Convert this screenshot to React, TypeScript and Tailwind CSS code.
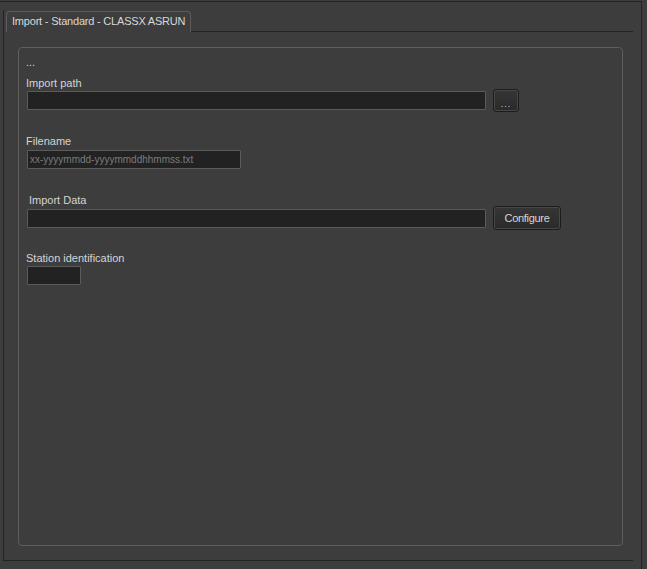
import * as React from "react";

const font = { fontFamily: '"Liberation Sans", Arial, sans-serif' };

function Field({ w, children }: { w: string; children?: React.ReactNode }) {
  return (
    <div
      className={`${w} h-[19px] shrink-0 rounded-[1px] border border-[#5b5b5b] bg-[#222222] px-[2px] text-[10px] leading-[17px] text-[#7c7c7c]`}
    >
      {children}
    </div>
  );
}

function Btn({ w, children }: { w: string; children: React.ReactNode }) {
  return (
    <button
      className={`${w} ml-[7px] shrink-0 rounded-[3px] border border-[#1c1c1c] bg-gradient-to-b from-[#353535] to-[#2a2a2a] text-[11px] text-[#d6d6d6] shadow-[inset_0_0_0_1px_#474747]`}
    >
      {children}
    </button>
  );
}

export default function App() {
  return (
    <div className="h-[569px] w-[647px] overflow-hidden bg-[#3d3d3d] pt-px text-[#d4d4d4]" style={font}>
      <div className="h-[568px] w-[642px] border-t border-r border-[#232323]">
        {/* tab control */}
        <div className="ml-[3px] mt-[8px] w-[630px] border-l border-[#242424]">
          <div className="flex h-[22px] items-end">
            <div className="ml-[2px] h-[21px] shrink-0 rounded-t-[4px] border border-b-0 border-[#5c5c5c] px-[5px] text-[11px] leading-[19px] tracking-[-0.2px] text-[#d8d8d8]">
              Import - Standard - CLASSX ASRUN
            </div>
            <div className="h-full flex-1 border-b border-[#232323]" />
          </div>

          <div className="h-[529px] border-b border-[#232323] pb-[14px] pl-[14px] pr-[10px] pt-[15px]">
            {/* group box */}
            <div className="h-[499px] rounded-[4px] border border-[#5e5e5e] pl-[7px] pt-[7px] text-[11px] leading-[14px]">
              <div>...</div>
              <div className="mt-[7px]">Import path</div>
              <div className="-mt-px flex h-[23px] items-start pl-px">
                <div className="mt-[2px]">
                  <Field w="w-[459px]" />
                </div>
                <Btn w="w-[26px] h-[23px]">
                  <span className="relative top-[3px] text-[9px] tracking-[1px]">...</span>
                </Btn>
              </div>

              <div className="mt-[22px]">Filename</div>
              <div className="mt-[2px] pl-px">
                <Field w="w-[214px]">xx-yyyymmdd-yyyymmddhhmmss.txt</Field>
              </div>

              <div className="ml-[3px] mt-[24px]">Import Data</div>
              <div className="-mt-px flex h-[24px] items-start pl-px">
                <div className="mt-[3px]">
                  <Field w="w-[459px]" />
                </div>
                <Btn w="w-[68px] h-[24px] tracking-[-0.3px]">Configure</Btn>
              </div>

              <div className="mt-[21px]">Station identification</div>
              <div className="mt-px pl-px">
                <Field w="w-[54px]" />
              </div>
            </div>
          </div>
        </div>
      </div>
    </div>
  );
}
